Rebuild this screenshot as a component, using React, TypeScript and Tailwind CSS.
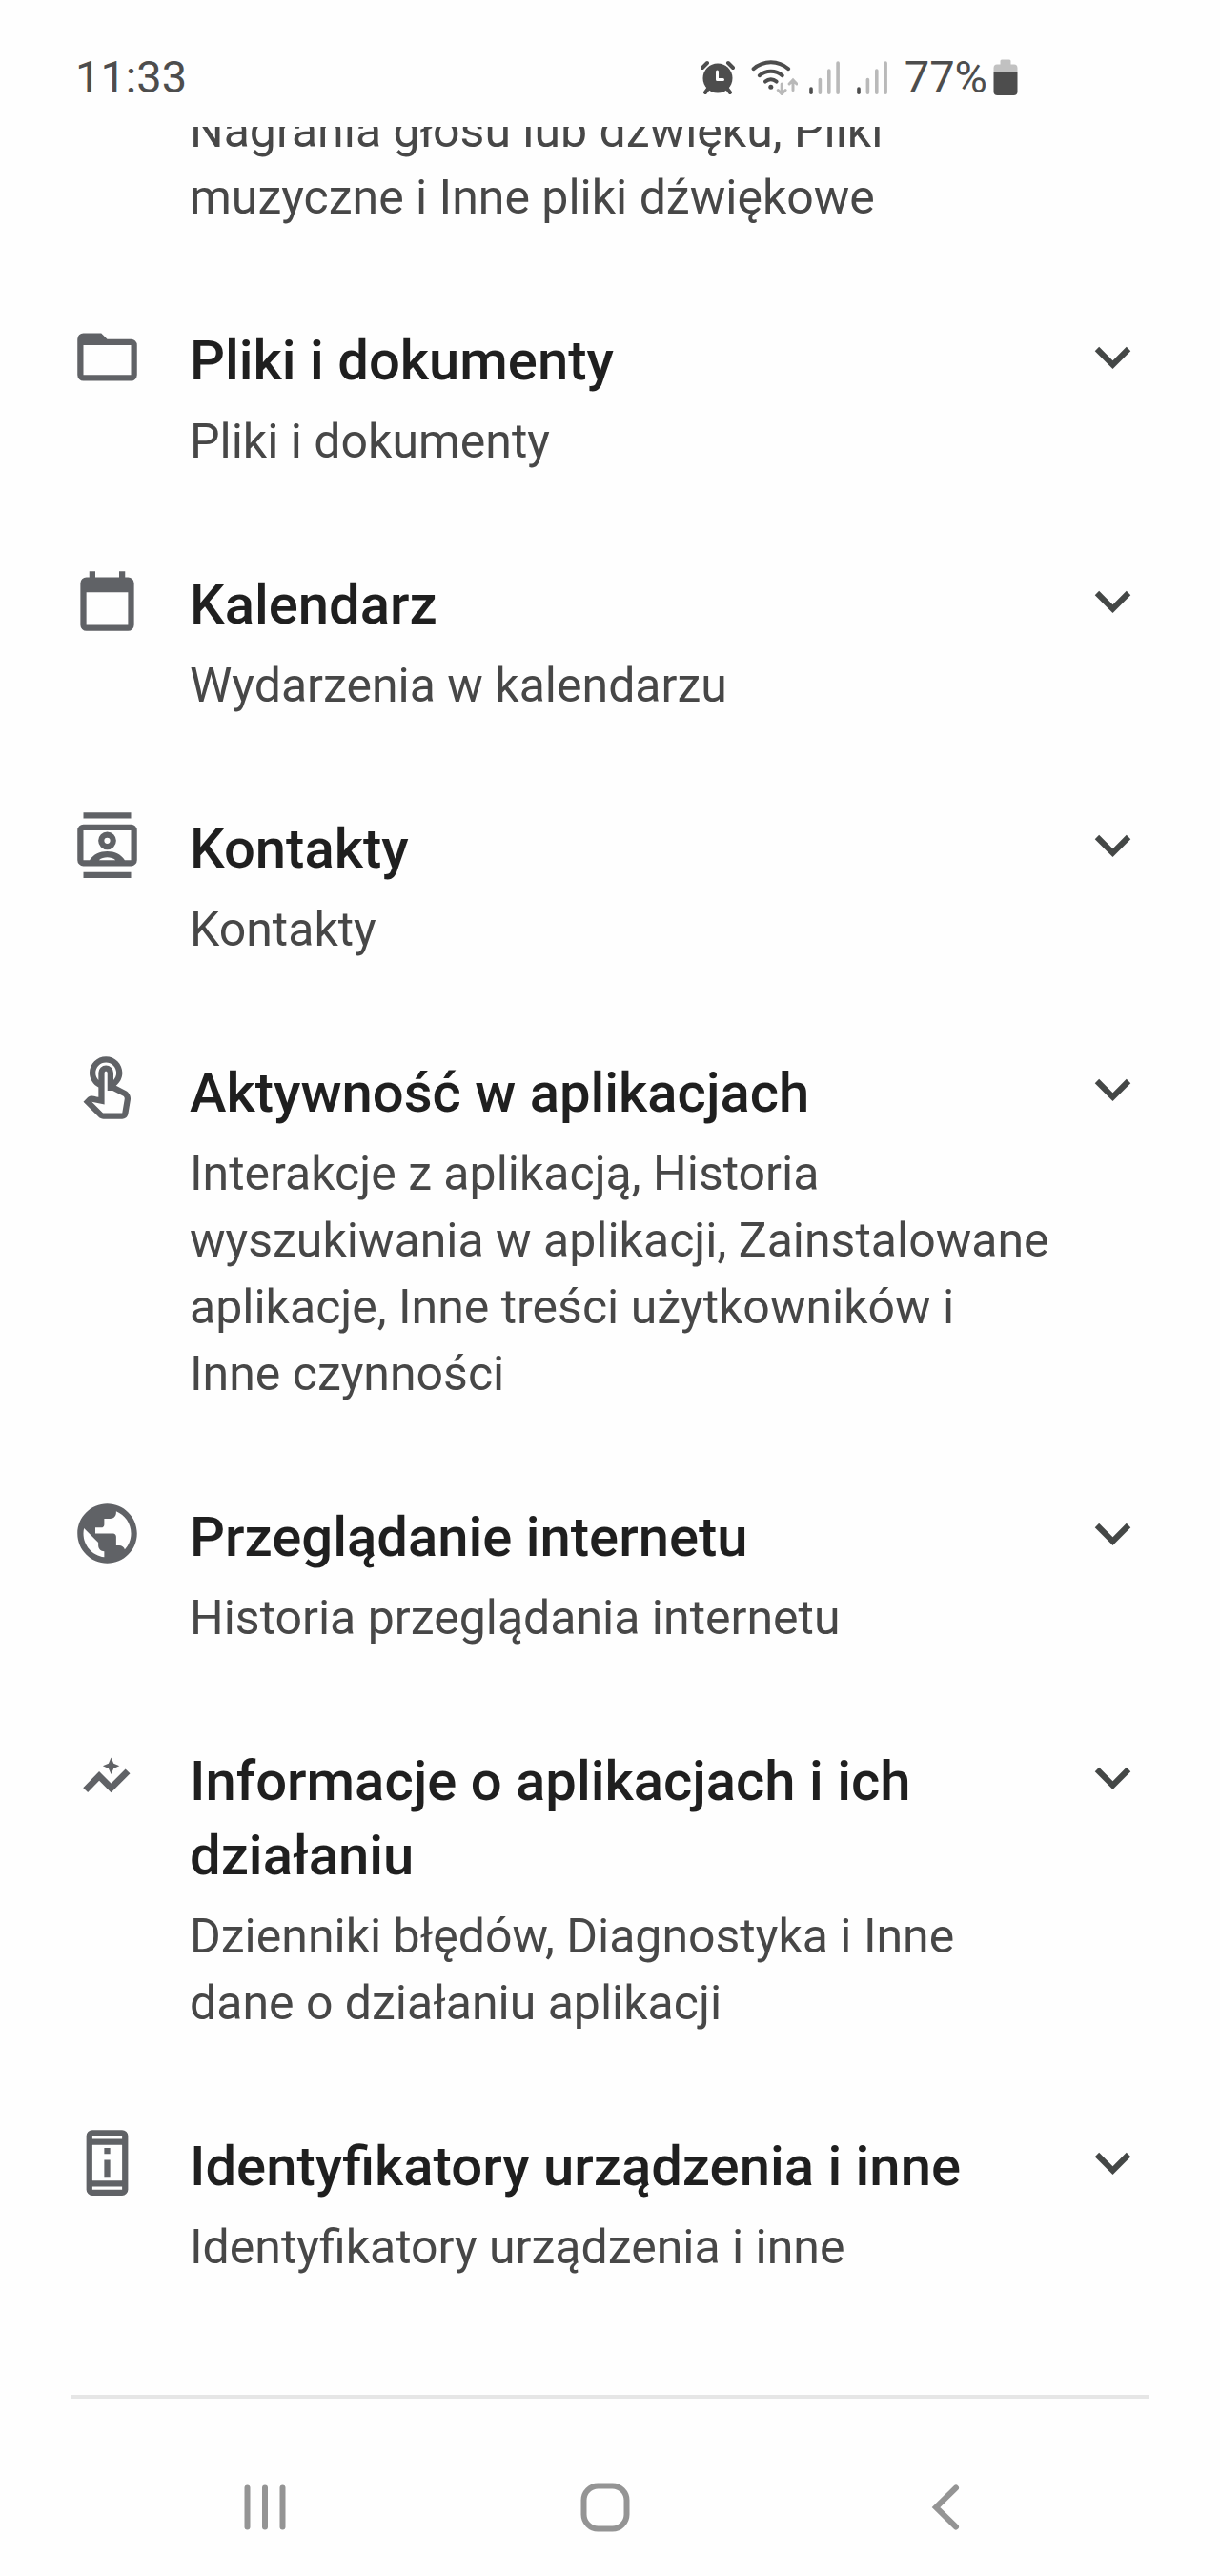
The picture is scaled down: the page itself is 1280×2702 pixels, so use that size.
import React, { useState } from 'react';
import { MdExpandMore, MdOutlineTouchApp, MdPublic } from 'react-icons/md';

interface IconProps {
  className?: string;
}

interface Category {
  id: string;
  title: string;
  details: string;
  icon: React.ComponentType<IconProps>;
}

const FolderIcon: React.FC<IconProps> = ({ className }) => (
  <svg viewBox="0 0 24 24" fill="currentColor" className={className} aria-hidden="true">
    <path d="M4 20q-.825 0-1.412-.587T2 18V6q0-.825.588-1.412T4 4h6l2 2h8q.825 0 1.413.588T22 8v10q0 .825-.587 1.413T20 20Zm0-2h16V8H4Z" />
  </svg>
);

const CalendarIcon: React.FC<IconProps> = ({ className }) => (
  <svg viewBox="0 0 24 24" fill="currentColor" className={className} aria-hidden="true">
    <path d="M5 22q-.825 0-1.412-.587T3 20V6q0-.825.588-1.412T5 4h1V2h2v2h8V2h2v2h1q.825 0 1.413.588T21 6v14q0 .825-.587 1.413T19 22Zm0-2h14V9H5Z" />
  </svg>
);

const ContactsIcon: React.FC<IconProps> = ({ className }) => (
  <svg viewBox="0 0 24 24" fill="currentColor" className={className} aria-hidden="true">
    <path d="M4 1h16v2H4zM4 21h16v2H4z" />
    <path
      fillRule="evenodd"
      d="M4 5h16q.825 0 1.413.588T22 7v10q0 .825-.587 1.413T20 19H4q-.825 0-1.412-.587T2 17V7q0-.825.588-1.412T4 5Zm0 2v10h2.1c1.3-1.9 3.4-2.9 5.9-2.9s4.6 1 5.9 2.9H20V7Zm5.2 10h5.6c-.8-.6-1.8-.9-2.8-.9s-2 .3-2.8.9Z"
    />
    <circle cx="12" cy="10.5" r="2" fill="none" stroke="currentColor" strokeWidth="2" />
  </svg>
);

const InsightsIcon: React.FC<IconProps> = ({ className }) => (
  <svg viewBox="0 0 24 24" fill="currentColor" className={className} aria-hidden="true">
    <path d="M4.700 16.200 9.300 11.500l4 4 5.600-5.600" fill="none" stroke="currentColor" strokeWidth="2.200" />
    <path d="m13.300 5.300.85 1.950 1.950.85-1.950.85-.85 1.950-.85-1.950-1.950-.85 1.950-.85z" />
  </svg>
);

const DeviceInfoIcon: React.FC<IconProps> = ({ className }) => (
  <svg viewBox="0 0 24 24" fill="currentColor" className={className} aria-hidden="true">
    <path
      fillRule="evenodd"
      d="M7 1h10q.825 0 1.413.588T19 3v18q0 .825-.587 1.413T17 23H7q-.825 0-1.412-.587T5 21V3q0-.825.588-1.412T7 1Zm0 2v1h10V3Zm0 3v12h10V6Zm0 14v1h10v-1Z"
    />
    <path d="M11 7h2v2h-2zM11 11h2v6h-2z" />
  </svg>
);

const AlarmIcon: React.FC = () => (
  <svg width="36" height="38" viewBox="0 0 36 38" fill="none" className="mr-4" aria-label="Alarm">
    <circle cx="18" cy="20" r="15.5" fill="#4d4d4d" />
    <path d="M2 9l5-5M34 9l-5-5M8 31l-3 4M28 31l3 4" stroke="#4d4d4d" strokeWidth="4" strokeLinecap="round" />
    <path d="M17.5 13v8.500h6" stroke="#fefefe" strokeWidth="3" strokeLinecap="round" strokeLinejoin="round" />
  </svg>
);

const WifiIcon: React.FC = () => (
  <svg width="50" height="38" viewBox="0 0 50 38" fill="none" strokeLinecap="round" className="mr-3" aria-label="Wi-Fi">
    <path
      d="M3.500 10.200C14 .8 29.600.8 40.200 10.200M9.800 17.200c6.800-6 17.200-6 24 0M16 23.600c3.500-3 8.100-3 11.600 0"
      stroke="#4d4d4d"
      strokeWidth="4"
    />
    <circle cx="21.800" cy="29.300" r="2.500" fill="#4d4d4d" />
    <path d="M33.200 26v10M29.300 32.500l3.900 4 3.900-4M45 32.500v-10M41.100 26l3.900-4 3.900 4" stroke="#b9b9b9" strokeWidth="3" />
  </svg>
);

const SignalIcon: React.FC = () => (
  <svg width="32" height="38" viewBox="0 0 32 38" fill="none" strokeLinecap="round" strokeWidth="3.600" className="mr-[18px]" aria-label="Sygnał">
    <path d="M2 31v4.200" stroke="#4d4d4d" />
    <path d="M11.400 21.500v13.700M20.800 12v23.200M30.100 4v31.200" stroke="#b9b9b9" />
  </svg>
);

const BatteryIcon: React.FC = () => (
  <svg width="26" height="38" viewBox="0 0 26 38" className="ml-1.5" aria-label="Bateria">
    <path d="M9 .5h8q1.500 0 1.500 1.500v3.500H22q3.500 0 3.500 4V14H.5V9.500q0-4 3.500-4h3.500V2Q7.500.5 9 .5Z" fill="#c1c1c1" />
    <path d="M.5 14h25v20q0 4-4 4h-17q-4 0-4-4Z" fill="#4d4d4d" />
  </svg>
);

const categories: Category[] = [
  { id: 'files', title: 'Pliki i dokumenty', details: 'Pliki i dokumenty', icon: FolderIcon },
  { id: 'calendar', title: 'Kalendarz', details: 'Wydarzenia w kalendarzu', icon: CalendarIcon },
  { id: 'contacts', title: 'Kontakty', details: 'Kontakty', icon: ContactsIcon },
  {
    id: 'activity',
    title: 'Aktywność w aplikacjach',
    details:
      'Interakcje z aplikacją, Historia wyszukiwania w aplikacji, Zainstalowane aplikacje, Inne treści użytkowników i Inne czynności',
    icon: MdOutlineTouchApp,
  },
  { id: 'web', title: 'Przeglądanie internetu', details: 'Historia przeglądania internetu', icon: MdPublic },
  {
    id: 'performance',
    title: 'Informacje o aplikacjach i ich działaniu',
    details: 'Dzienniki błędów, Diagnostyka i Inne dane o działaniu aplikacji',
    icon: InsightsIcon,
  },
  {
    id: 'device',
    title: 'Identyfikatory urządzenia i inne',
    details: 'Identyfikatory urządzenia i inne',
    icon: DeviceInfoIcon,
  },
];

const StatusBar: React.FC = () => (
  <header className="flex h-[133px] items-center justify-between pt-7 pr-[212px] pl-[79px] text-[47px] leading-[56px] text-[#4d4d4d]">
    <span>11:33</span>
    <div className="flex items-center">
      <AlarmIcon />
      <WifiIcon />
      <SignalIcon />
      <SignalIcon />
      <span>77%</span>
      <BatteryIcon />
    </div>
  </header>
);

const NavigationBar: React.FC = () => (
  <nav className="grid grid-cols-3 justify-items-center pt-[88px] pr-[109px] pb-[44px] pl-[99px] text-[#949494]">
    <button aria-label="Ostatnie">
      <svg width="52" height="52" viewBox="0 0 52 52" stroke="currentColor" strokeWidth="6" strokeLinecap="round">
        <path d="M7.500 5.500v41M26 5.500v41M44.500 5.500v41" />
      </svg>
    </button>
    <button aria-label="Ekran główny">
      <svg width="52" height="52" viewBox="0 0 52 52" fill="none" stroke="currentColor" strokeWidth="6">
        <rect x="3.500" y="3.500" width="45" height="45" rx="15" />
      </svg>
    </button>
    <button aria-label="Wstecz">
      <svg width="52" height="52" viewBox="0 0 52 52" fill="none" stroke="currentColor" strokeWidth="6" strokeLinecap="round">
        <path d="M37 5.500 16 26l21 20.500" />
      </svg>
    </button>
  </nav>
);

const App: React.FC = () => {
  const [expanded, setExpanded] = useState<string[]>([]);

  const toggle = (id: string) => {
    setExpanded(prev => (prev.includes(id) ? prev.filter(item => item !== id) : [...prev, id]));
  };

  return (
    <div className="min-h-screen bg-[#fefefe] font-[Roboto,sans-serif]">
      <StatusBar />
      <main className="overflow-hidden px-[75px]">
        {/* tail of the section that is scrolled under the status bar */}
        <p className="-mt-[31px] mb-[95px] pr-[102px] pl-[124px] text-[50px] leading-[70px] text-[#474747]">
          Nagrania głosu lub dźwięku, Pliki muzyczne i Inne pliki dźwiękowe
        </p>
        <ul className="flex flex-col gap-[95px] border-b-4 border-[#e6e6e6] pb-[120px]">
          {categories.map(({ id, title, details, icon: Icon }) => (
            <li key={id} className="flex items-start">
              <Icon className="size-[75px] shrink-0 text-[#606266]" />
              <div className="mr-[27px] ml-[49px] min-w-0 flex-1 pt-0.5">
                <h2 className="text-[58px] leading-[78px] font-medium text-[#1f1f1f]">{title}</h2>
                <p className="mt-[11px] text-[50px] leading-[70px] text-[#474747]">{details}</p>
              </div>
              <button aria-label={title} aria-expanded={expanded.includes(id)} onClick={() => toggle(id)}>
                <MdExpandMore className={expanded.includes(id) ? 'size-[75px] rotate-180 text-[#444746]' : 'size-[75px] text-[#444746]'} />
              </button>
            </li>
          ))}
        </ul>
      </main>
      <NavigationBar />
    </div>
  );
};

export default App;
